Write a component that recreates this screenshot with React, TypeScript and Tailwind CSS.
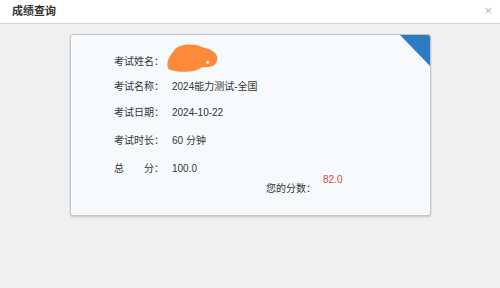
const FONT = "font-['Liberation_Sans','Noto_Sans_CJK_SC',sans-serif]"

const rows: { label: string; value: string; h: string }[] = [
  { label: '考试姓名：', value: '', h: 'h-[26px]' },
  { label: '考试名称：', value: '2024能力测试-全国', h: 'h-[25px]' },
  { label: '考试日期：', value: '2024-10-22', h: 'h-[27px]' },
  { label: '考试时长：', value: '60 分钟', h: 'h-[28px]' },
  { label: '总　　分：', value: '100.0', h: 'h-[28px]' },
]

function Scribble() {
  return (
    <svg className="absolute left-[94px] top-[8px]" width="56" height="31" viewBox="0 0 56 32">
      <path
        d="M9 7 C13 1, 30 0, 37 4 C45 6, 54 9, 53 17 C52 25, 45 25, 37 25 C31 31, 12 31, 3 27 C-1 21, 4 13, 9 7 Z"
        fill="#fb8b3b"
      />
      <circle cx="43" cy="20" r="1.3" fill="#fff" />
    </svg>
  )
}

export default function App() {
  return (
    <div className={`flex h-[288px] w-[500px] flex-col bg-[#f0f0f0] text-[#333] ${FONT}`}>
      <header className="flex h-[24px] shrink-0 items-center justify-between border-b border-[#d4d4d4] bg-white pl-[12px] pr-[8px]">
        <span className="text-[11px] font-bold text-[#333]">成绩查询</span>
        <span className="-mt-[3px] text-[13px] leading-none text-[#b5b5b5]">×</span>
      </header>

      <div className="pl-[70px] pt-[10px]">
        <div className="relative h-[182px] w-[361px] overflow-hidden rounded-[3px] border border-[#c4c4c4] bg-[#f7fafd] shadow-[0_1px_2px_rgba(0,0,0,0.18)]">
          <svg className="absolute right-0 top-0" width="30" height="31" viewBox="0 0 30 31">
            <polygon points="0,0 30,0 30,31" fill="#2d7cc3" />
          </svg>

          <div className="flex flex-col pl-[43px] pt-[13px] text-[10px]">
            {rows.map((r) => (
              <div key={r.label} className={`flex items-center ${r.h}`}>
                <span className="w-[58px] whitespace-pre">{r.label}</span>
                <span>{r.value}</span>
              </div>
            ))}
          </div>

          <div className="-mt-[10px] flex items-start pl-[195px] text-[10px]">
            <span className="mt-[9px]">您的分数：</span>
            <span className="ml-[7px] text-[#e03b3b]">82.0</span>
          </div>

          <Scribble />
        </div>
      </div>
    </div>
  )
}
